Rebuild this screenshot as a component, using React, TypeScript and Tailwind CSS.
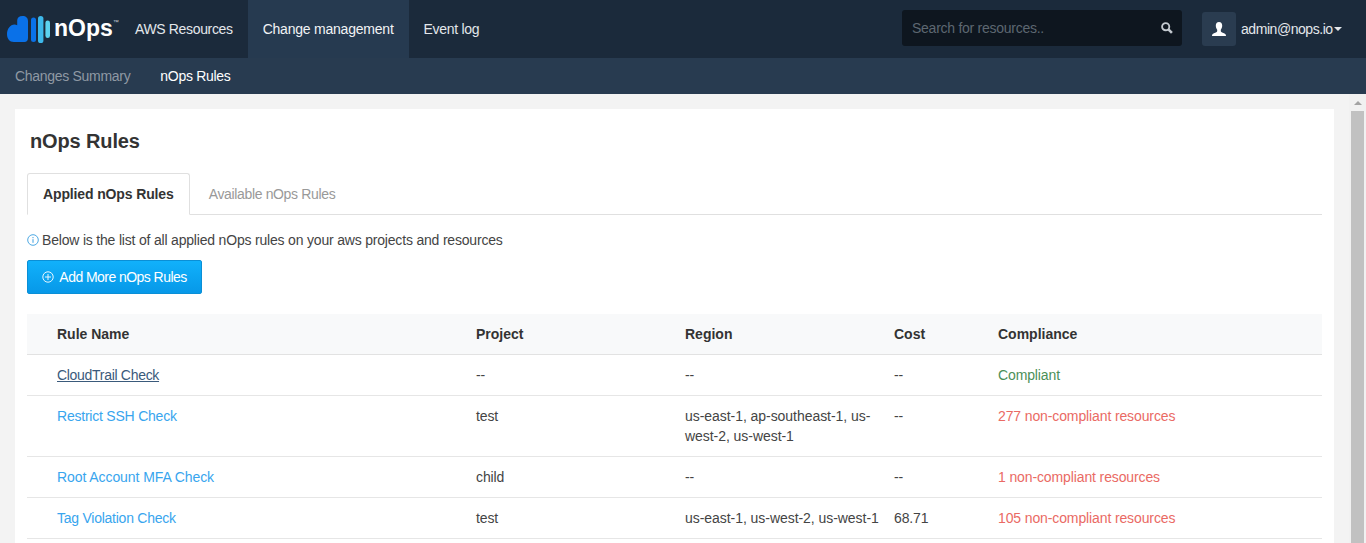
import React from "react";

const rows = [
  { name: "CloudTrail Check", track: "tracking-[-0.3px]", hover: true, project: "--", region: "--", cost: "--", comp: "Compliant", ok: true },
  { name: "Restrict SSH Check", track: "tracking-[-0.22px]", project: "test", region: "us-east-1, ap-southeast-1, us-west-2, us-west-1", cost: "--", comp: "277 non-compliant resources" },
  { name: "Root Account MFA Check", track: "tracking-[-0.08px]", project: "child", region: "--", cost: "--", comp: "1 non-compliant resources" },
  { name: "Tag Violation Check", track: "tracking-[-0.25px]", project: "test", region: "us-east-1, us-west-2, us-west-1", cost: "68.71", comp: "105 non-compliant resources" },
];

function Logo() {
  return (
    <div className="flex items-center w-[120px] h-[58px] pl-[7px] shrink-0">
      <svg width="43" height="27" viewBox="0 0 43 27" className="shrink-0">
        <path d="M6.8 26 C2.5 26 0 22.5 0 18 C0 13 3.2 8.5 7.5 8.5 C8.4 8.5 9.4 8.7 10.2 9.2 L10.2 4.5 C10.2 2 12 0 15.5 0 C19 0 21 2 21 5 L21 22 C21 24.5 19.5 26 17.5 26 Z" fill="#0a71e8" />
        <rect x="24" y="1.5" width="5" height="24.5" rx="2.5" fill="#0a71e8" />
        <rect x="31" y="0" width="5.4" height="27" rx="2.6" fill="#3db8ea" />
        <rect x="38.4" y="4.5" width="4.6" height="17.5" rx="2.3" fill="#5cd2ee" />
      </svg>
      <span className="text-white font-bold text-[23px] leading-none ml-[4px] -mt-[1px]">nOps</span>
      <span className="text-[#cfd6dc] text-[6px] leading-none self-start mt-[19px]">™</span>
    </div>
  );
}

export default function App() {
  return (
    <div className="h-[543px] w-[1366px] flex flex-col overflow-hidden bg-[#f3f3f3] text-[#444] text-[14px] font-['Liberation_Sans',sans-serif]">
      <header className="h-[58px] bg-[#1b2a3b] flex items-stretch shrink-0">
        <Logo />
        <a className="flex items-center px-[15px] text-[#e3e7eb] tracking-[-0.35px]">AWS Resources</a>
        <a className="flex items-center px-[15px] text-[#f1f3f5] bg-[#263a50] tracking-[-0.22px]">Change management</a>
        <a className="flex items-center pl-[15px] pr-[14px] text-[#e3e7eb] tracking-[-0.3px]">Event log</a>
        <div className="flex-1" />
        <div className="self-center w-[280px] h-[36px] mt-[-2px] bg-[#0e161f] rounded-[3px] flex items-center justify-between pl-[10px] pr-[9px]">
          <span className="text-[#5d6771] tracking-[-0.26px]">Search for resources..</span>
          <svg width="12" height="12" viewBox="0 0 11 11" fill="none">
            <circle cx="4.3" cy="4.3" r="3.3" stroke="#c3c9cf" strokeWidth="1.7" />
            <path d="M6.8 6.8 L10 10" stroke="#c3c9cf" strokeWidth="2.3" />
          </svg>
        </div>
        <div className="self-center w-[34px] h-[34px] ml-[20px] rounded-[3px] bg-[#2a3c50] flex items-center justify-center">
          <svg width="14" height="14" viewBox="0 0 14 14" fill="#ffffff">
            <path d="M7 0 C9.2 0 10.2 1.6 10.2 3.6 C10.2 5.6 9.4 7 8.8 7.8 L8.8 9 C8.8 10 10.2 10.4 12 11.2 C13.4 11.8 14 12.6 14 14 L0 14 C0 12.6 0.6 11.8 2 11.2 C3.8 10.4 5.2 10 5.2 9 L5.2 7.8 C4.6 7 3.8 5.6 3.8 3.6 C3.8 1.6 4.8 0 7 0 Z" />
          </svg>
        </div>
        <div className="flex items-center ml-[5px] w-[125px] text-[#e3e7eb] tracking-[-0.45px]">
          admin@nops.io
          <span className="ml-[1px] w-0 h-0 border-x-[4px] border-x-transparent border-t-[4px] border-t-[#e3e7eb]" />
        </div>
      </header>
      <nav className="h-[36px] bg-[#283b50] flex items-center shrink-0 pl-[15px] gap-[30px] tracking-[-0.3px]">
        <span className="text-[#8f99a4]">Changes Summary</span>
        <span className="text-white">nOps Rules</span>
      </nav>
      <div className="flex flex-1 min-h-0">
        <main className="flex-1 min-w-0 overflow-hidden pl-[15px] pr-[15px] pt-[15px]">
          <section className="bg-white px-[12px] pt-[19px] pb-[20px]">
            <h1 className="text-[20px] leading-[26px] font-bold text-[#333] px-[3px] tracking-[-0.13px]">nOps Rules</h1>
            <div className="mt-[20px] h-[41px] flex items-end border-b border-[#e0e0e0]">
              <div className="h-[42px] -mb-px pt-[1px] bg-white border border-[#e0e0e0] border-b-white rounded-t-[3px] px-[15px] flex items-center font-bold tracking-[-0.13px] text-[#333]">Applied nOps Rules</div>
              <div className="h-[41px] pt-[1px] px-[19px] flex items-center text-[#999] tracking-[-0.35px]">Available nOps Rules</div>
            </div>
            <p className="mt-[16px] flex items-center gap-[3px] leading-[18px] tracking-[-0.19px]">
              <svg width="12" height="12" viewBox="0 0 12 12" className="shrink-0" fill="none">
                <circle cx="6" cy="6" r="5.3" stroke="#3b9fe0" strokeWidth="0.9" />
                <path d="M6 3v1.2M6 5.2v3.6" stroke="#3b9fe0" strokeWidth="1" />
              </svg>
              Below is the list of all applied nOps rules on your aws projects and resources
            </p>
            <button className="mt-[11px] h-[34px] w-[175px] rounded-[2px] border border-[#0a8fd6] bg-gradient-to-b from-[#11b1fb] to-[#0798e8] text-white flex items-center justify-center gap-[5px] tracking-[-0.55px]">
              <svg width="12" height="12" viewBox="0 0 12 12" fill="none">
                <circle cx="6" cy="6" r="5.2" stroke="#fff" strokeWidth="0.9" />
                <path d="M6 3v6M3 6h6" stroke="#fff" strokeWidth="0.9" />
              </svg>
              Add More nOps Rules
            </button>
            <table className="mt-[20px] w-full table-fixed border-collapse">
              <thead>
                <tr className="h-[40px] bg-[#f8f9fa] border-b border-[#e2e2e2] text-left text-[#333]">
                  <th className="w-[449px] pl-[30px] pt-[1px] font-bold">Rule Name</th>
                  <th className="w-[209px] pt-[1px] font-bold">Project</th>
                  <th className="w-[209px] pt-[1px] font-bold">Region</th>
                  <th className="w-[104px] pt-[1px] font-bold">Cost</th>
                  <th className="pt-[1px] font-bold">Compliance</th>
                </tr>
              </thead>
              <tbody className="tracking-[-0.12px]">
                {rows.map((r) => (
                  <tr key={r.name} className="border-b border-[#e6e6e6] align-top">
                    <td className={"pl-[30px] pt-[10px] pb-[10px] leading-[20px] " + r.track}>
                      <a className={r.hover ? "text-[#3a5a7b] underline" : "text-[#38a5ee]"}>{r.name}</a>
                    </td>
                    <td className="pt-[10px] pb-[10px] leading-[20px]">{r.project}</td>
                    <td className="pt-[10px] pb-[10px] leading-[20px] pr-[10px] tracking-[-0.05px]">{r.region}</td>
                    <td className="pt-[10px] pb-[10px] leading-[20px]">{r.cost}</td>
                    <td className={"pt-[10px] pb-[10px] leading-[20px] " + (r.ok ? "text-[#4b8f58]" : "text-[#ea6a64]")}>{r.comp}</td>
                  </tr>
                ))}
              </tbody>
            </table>
          </section>
        </main>
        <div className="w-[17px] shrink-0 bg-[#f1f1f1] flex flex-col items-center pt-[7px]">
          <span className="w-0 h-0 border-x-[4px] border-x-transparent border-b-[4px] border-b-[#a3a3a3]" />
          <div className="w-[13px] flex-1 mt-[6px] bg-[#c1c1c1]" />
        </div>
      </div>
    </div>
  );
}
